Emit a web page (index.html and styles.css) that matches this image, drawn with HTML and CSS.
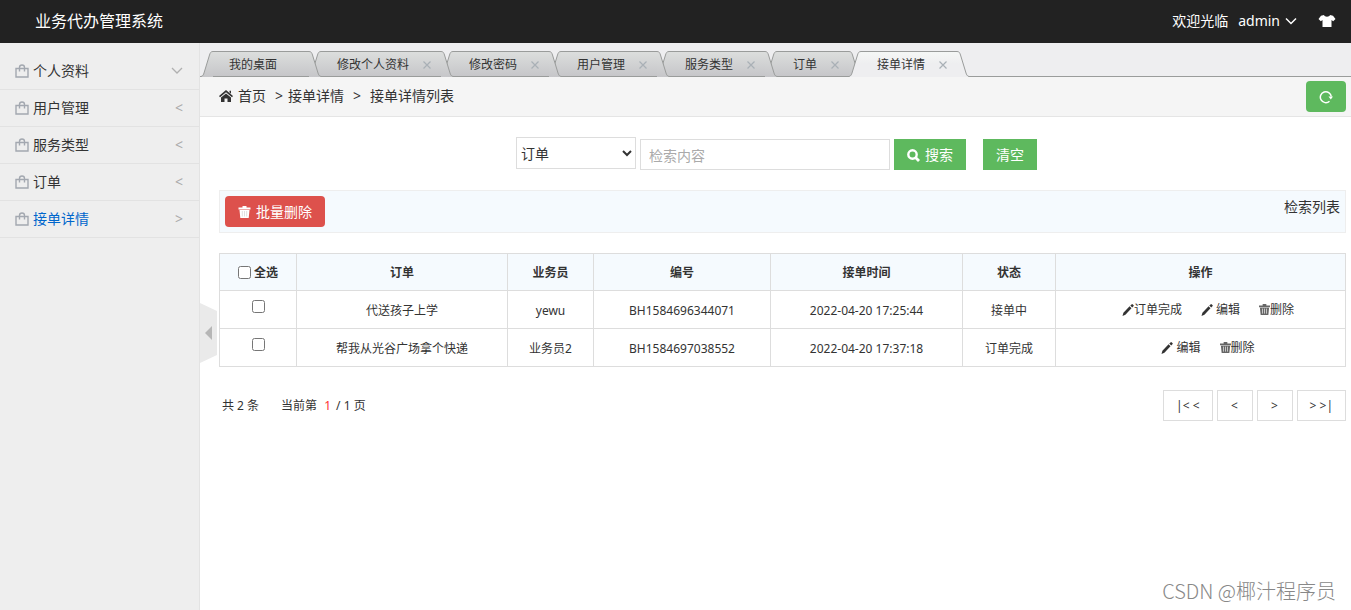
FILE: index.html
```
<!DOCTYPE html>
<html lang="zh-CN">
<head>
<meta charset="utf-8">
<title>业务代办管理系统</title>
<link rel="stylesheet" href="styles.css">
</head>
<body>
<svg class="defs" aria-hidden="true">
  <defs>
    <linearGradient id="tab-grey" x1="0" y1="0" x2="0" y2="1"><stop offset="0" stop-color="#dcdedd"/><stop offset="1" stop-color="#c6c6c9"/></linearGradient>
    <linearGradient id="tab-light" x1="0" y1="0" x2="0" y2="1"><stop offset="0" stop-color="#f5f7f6"/><stop offset="0.5" stop-color="#eeeef0"/><stop offset="1" stop-color="#eeeef0"/></linearGradient>
  </defs>
  <symbol id="bag" viewBox="0 0 14 14"><path d="M1 4.500h12v8.500H1zM4.500 7.500V3.500a2.500 2.500 0 0 1 5 0v4" fill="none" stroke="currentColor" stroke-width="1.400"/></symbol>
  <symbol id="trash" viewBox="0 0 12 12"><path d="M4 1.500V0h4v1.500h4V3.500H0v-2zM1 4h10l-.8 8H1.800z" fill="currentColor"/><path class="slits" d="M3.800 5v5.500M6 5v5.500M8.200 5v5.500" stroke-width=".9"/></symbol>
  <symbol id="pencil" viewBox="0 0 12 12"><path d="M.5 12l.9-3.300L7.600 2.300l1.900 1.900-6.100 6.600zM8.300 1.600L9.500.4a1 1 0 0 1 1.300 0l.6.6a.9.9 0 0 1 0 1.300l-1.200 1.200z" fill="currentColor"/></symbol>
  <symbol id="cap-left" viewBox="0 0 12 26"><path d="M0 25.500C2 25 2.500 23.500 3 22L8.500 4C9.200 1.800 9.800.5 12 .5V26H0z"/><path d="M0 25.500C2 25 2.500 23.500 3 22L8.500 4C9.200 1.800 9.800.5 12 .5" fill="none" stroke="#9a9c9b"/></symbol>
  <symbol id="cap-right" viewBox="0 0 12 26"><path d="M12 25.500C10 25 9.500 23.500 9 22L3.500 4C2.800 1.800 2.200.5 0 .5V26H12z"/><path d="M12 25.500C10 25 9.500 23.500 9 22L3.500 4C2.800 1.800 2.200.5 0 .5" fill="none" stroke="#9a9c9b"/></symbol>
</svg>

<header class="topbar">
  <h1 class="brand">业务代办管理系统</h1>
  <div class="user">
    <span>欢迎光临</span>
    <button class="plain user-menu" type="button">admin
      <svg width="12" height="12" viewBox="0 0 12 12"><path d="M1 3.500l5 5 5-5" fill="none" stroke="currentColor" stroke-width="1.500"/></svg>
    </button>
    <button class="plain skin" type="button" aria-label="换肤">
      <svg width="18" height="14" viewBox="0 0 18 14"><path d="M6 1l-3 .8L.5 5l2.300 2.300L4.500 6v7h9V6l1.700 1.300L17.500 5 15 1.800 12 1C11.500 3.300 6.500 3.300 6 1z" fill="currentColor"/></svg>
    </button>
  </div>
</header>

<div class="body">
  <nav class="sidebar">
    <a class="nav-item" href="#"><svg class="bag"><use href="#bag"/></svg><span>个人资料</span><svg class="down" viewBox="0 0 12 12"><path d="M1 3l5 5 5-5" fill="none" stroke="currentColor" stroke-width="1.300"/></svg></a>
    <a class="nav-item" href="#"><svg class="bag"><use href="#bag"/></svg><span>用户管理</span><i class="arrow">&lt;</i></a>
    <a class="nav-item" href="#"><svg class="bag"><use href="#bag"/></svg><span>服务类型</span><i class="arrow">&lt;</i></a>
    <a class="nav-item" href="#"><svg class="bag"><use href="#bag"/></svg><span>订单</span><i class="arrow">&lt;</i></a>
    <a class="nav-item current" href="#"><svg class="bag"><use href="#bag"/></svg><span>接单详情</span><i class="arrow">&gt;</i></a>
  </nav>

  <main class="main">
    <button class="plain collapse" type="button" aria-label="收起菜单">
      <svg width="17" height="60" viewBox="0 0 17 60"><path d="M0 0l17 8v44L0 60z" fill="#eaeaea"/><path d="M12 23v14l-7-7z" fill="#b6b6b6"/></svg>
    </button>
    <ul class="tabs">
      <li class="tab"><svg class="cap"><use href="#cap-left"/></svg><span class="tab-body">我的桌面</span><svg class="cap"><use href="#cap-right"/></svg></li>
      <li class="tab"><svg class="cap"><use href="#cap-left"/></svg><span class="tab-body">修改个人资料<button class="plain close" type="button" aria-label="关闭"><svg viewBox="0 0 8 8"><path d="M.5.5l7 7M7.500.5l-7 7"/></svg></button></span><svg class="cap"><use href="#cap-right"/></svg></li>
      <li class="tab"><svg class="cap"><use href="#cap-left"/></svg><span class="tab-body">修改密码<button class="plain close" type="button" aria-label="关闭"><svg viewBox="0 0 8 8"><path d="M.5.5l7 7M7.500.5l-7 7"/></svg></button></span><svg class="cap"><use href="#cap-right"/></svg></li>
      <li class="tab"><svg class="cap"><use href="#cap-left"/></svg><span class="tab-body">用户管理<button class="plain close" type="button" aria-label="关闭"><svg viewBox="0 0 8 8"><path d="M.5.5l7 7M7.500.5l-7 7"/></svg></button></span><svg class="cap"><use href="#cap-right"/></svg></li>
      <li class="tab"><svg class="cap"><use href="#cap-left"/></svg><span class="tab-body">服务类型<button class="plain close" type="button" aria-label="关闭"><svg viewBox="0 0 8 8"><path d="M.5.5l7 7M7.500.5l-7 7"/></svg></button></span><svg class="cap"><use href="#cap-right"/></svg></li>
      <li class="tab"><svg class="cap"><use href="#cap-left"/></svg><span class="tab-body">订单<button class="plain close" type="button" aria-label="关闭"><svg viewBox="0 0 8 8"><path d="M.5.5l7 7M7.500.5l-7 7"/></svg></button></span><svg class="cap"><use href="#cap-right"/></svg></li>
      <li class="tab active"><svg class="cap"><use href="#cap-left"/></svg><span class="tab-body">接单详情<button class="plain close" type="button" aria-label="关闭"><svg viewBox="0 0 8 8"><path d="M.5.5l7 7M7.500.5l-7 7"/></svg></button></span><svg class="cap"><use href="#cap-right"/></svg></li>
    </ul>

    <div class="crumbs">
      <svg class="home" width="14" height="12" viewBox="0 0 14 12"><path d="M7 0l7 6-1 1.200L7 2.200 1 7.200 0 6z" fill="currentColor"/><path d="M7 3.400l5 4.100V12H8.500V8.500h-3V12H2V7.500zM10.500.8H12v3l-1.500-1.300z" fill="currentColor"/></svg>
      <a href="#">首页</a><span class="sep">&gt;</span><span>接单详情</span><span class="sep wide">&gt;</span><span>接单详情列表</span>
      <button class="btn green round refresh" type="button" aria-label="刷新">
        <svg width="14" height="14" viewBox="0 0 14 14"><path d="M10.500 11.300A5.500 5.500 0 1 1 12.300 6.500" fill="none" stroke="currentColor" stroke-width="1.500"/><path d="M9.500 6.500h4.500l-2.200 3z" fill="currentColor"/></svg>
      </button>
    </div>

    <div class="content">
      <form class="search">
        <select class="field" aria-label="检索字段"><option>订单</option></select>
        <input class="keyword" type="text" placeholder="检索内容" aria-label="检索内容">
        <button class="btn green" type="button"><svg width="13" height="13" viewBox="0 0 13 13"><circle cx="5.500" cy="5.500" r="4.200" fill="none" stroke="currentColor" stroke-width="2.400"/><path d="M8.500 8.500l3.500 3.500" stroke="currentColor" stroke-width="2.800"/></svg>搜索</button>
        <button class="btn green clear" type="button">清空</button>
      </form>

      <div class="toolbar">
        <button class="btn red round" type="button"><svg width="13" height="12"><use href="#trash"/></svg>批量删除</button>
        <span class="caption">检索列表</span>
      </div>

      <table class="orders">
        <colgroup><col class="c1"><col class="c2"><col class="c3"><col class="c4"><col class="c5"><col class="c6"><col class="c7"></colgroup>
        <thead>
          <tr><th><label class="all"><input type="checkbox">全选</label></th><th>订单</th><th>业务员</th><th>编号</th><th>接单时间</th><th>状态</th><th>操作</th></tr>
        </thead>
        <tbody>
          <tr>
            <td class="pick"><input type="checkbox" aria-label="选择"></td><td>代送孩子上学</td><td>yewu</td><td>BH1584696344071</td><td>2022-04-20 17:25:44</td><td>接单中</td>
            <td class="ops"><div class="actions"><a href="#"><svg><use href="#pencil"/></svg>订单完成</a><a class="spaced" href="#"><svg><use href="#pencil"/></svg>编辑</a><a class="delete" href="#"><svg><use href="#trash"/></svg>删除</a></div></td>
          </tr>
          <tr>
            <td class="pick"><input type="checkbox" aria-label="选择"></td><td>帮我从光谷广场拿个快递</td><td>业务员2</td><td>BH1584697038552</td><td>2022-04-20 17:37:18</td><td>订单完成</td>
            <td class="ops"><div class="actions"><a class="spaced" href="#"><svg><use href="#pencil"/></svg>编辑</a><a class="delete" href="#"><svg><use href="#trash"/></svg>删除</a></div></td>
          </tr>
        </tbody>
      </table>

      <footer class="pager">
        <span>共 2 条</span><span class="where">当前第<b>1</b> / 1 页</span>
        <div class="pages">
          <a href="#">|&lt; &lt;</a><a href="#">&lt;</a><a href="#">&gt;</a><a href="#">&gt; &gt;|</a>
        </div>
      </footer>
    </div>
    <div class="watermark">CSDN @椰汁程序员</div>
  </main>
</div>
</body>
</html>
```
FILE: styles.css
```
* { box-sizing: border-box; }
body {
  margin: 0;
  min-height: 100vh;
  display: flex;
  flex-direction: column;
  background: #fff;
  color: #333;
  font: 14px/20px "Noto Sans", "Noto Sans CJK SC", sans-serif;
}
button, input, select { font: inherit; color: inherit; }
a { color: inherit; text-decoration: none; }
svg { flex: none; }
.defs { position: absolute; width: 0; height: 0; }
.plain { border: 0; padding: 0; background: none; cursor: pointer; }

.topbar {
  height: 43px;
  padding: 0 15px 2px 35px;
  display: flex;
  align-items: center;
  justify-content: space-between;
  background: #222;
  color: #fff;
}
.brand { margin: 0; font-size: 16px; font-weight: 400; }
.user { display: flex; align-items: center; gap: 10px; }
.user-menu { display: flex; align-items: center; gap: 5px; }
.skin { display: flex; margin-left: 11px; }

.body { flex: 1; display: flex; }
.sidebar {
  width: 200px;
  flex: none;
  padding-top: 10px;
  background: #eee;
  border-right: 1px solid #e3e3e3;
}
.nav-item {
  height: 37px;
  padding: 0 16px 0 15px;
  display: flex;
  align-items: center;
  gap: 4px;
  border-bottom: 1px solid #e2e2e2;
}
.nav-item span { flex: 1; }
.bag { width: 14px; height: 14px; color: #a3a8b0; }
.down { width: 12px; height: 12px; color: #b0b0b0; }
.arrow { font-style: normal; color: #aaa; }
.current span { color: #06c; }

.main { flex: 1; min-width: 0; position: relative; }
.collapse { position: absolute; left: 0; top: 260px; display: flex; }

.tabs {
  list-style: none;
  margin: 0;
  padding: 8px 0 0 1px;
  height: 34px;
  display: flex;
  background: #eeeef0;
  box-shadow: inset 0 -1px #9a9c9b;
}
.tab {
  position: relative;
  height: 26px;
  display: flex;
  margin-right: -12px;
  fill: url(#tab-grey);
}
.tab:nth-child(1) { z-index: 7; }
.tab:nth-child(2) { z-index: 6; }
.tab:nth-child(3) { z-index: 5; }
.tab:nth-child(4) { z-index: 4; }
.tab:nth-child(5) { z-index: 3; }
.tab:nth-child(6) { z-index: 2; }
.tab.active { z-index: 8; fill: url(#tab-light); }
.cap { width: 12px; height: 26px; }
.tab-body {
  padding: 2px 10px 0 16px;
  display: flex;
  align-items: center;
  font-size: 12px;
  border-top: 1px solid #9a9c9b;
  border-bottom: 1px solid #9a9c9b;
  background: linear-gradient(#dcdedd, #c6c6c9);
}
.tab:first-child .tab-body { padding-right: 32px; }
.active .tab-body { border-bottom-color: #eeeef0; background: linear-gradient(#f5f7f6, #eeeef0 50%); }
.close { width: 8px; height: 8px; margin-left: 14px; display: flex; }
.close svg { width: 8px; height: 8px; fill: none; stroke: #a9b0b6; stroke-width: 1.2; }

.crumbs {
  height: 40px;
  padding: 0 5px 1px 19px;
  display: flex;
  align-items: center;
  background: #f5f5f5;
  border-bottom: 1px solid #e5e5e5;
}
.home { margin-right: 5px; }
.sep { margin: 0 5px 0 9px; }
.sep.wide { margin-right: 9px; }
.refresh { margin-left: auto; }

.btn {
  height: 31px;
  padding: 1px 13px 0;
  display: flex;
  align-items: center;
  gap: 5px;
  border: 0;
  color: #fff;
  cursor: pointer;
}
.green { background: #5eb95e; }
.red { background: #dd514c; }
.round { border-radius: 4px; }

.content { padding: 20px 5px 0 19px; }
.search {
  display: flex;
  align-items: flex-end;
  justify-content: center;
  gap: 4px;
  padding-right: 12px;
}
.field, .keyword { border: 1px solid #ddd; background: #fff; outline: 0; }
.field { width: 120px; height: 32px; margin-bottom: 1px; padding: 0; }
.keyword { width: 250px; height: 31px; padding: 1px 8px 0; }
.keyword::placeholder { color: #aaa; }
.clear { margin-left: 13px; }

.toolbar {
  margin: 20px 0;
  padding: 5px;
  display: flex;
  align-items: flex-start;
  justify-content: space-between;
  background: #f5fafe;
  border: 1px solid #eee;
}
.caption { padding-top: 1px; }

.orders {
  width: 100%;
  table-layout: fixed;
  border-collapse: collapse;
  font-size: 12px;
  text-align: center;
}
.orders th, .orders td { height: 38px; padding: 2px 0 0; border: 1px solid #ddd; }
.orders th { height: 37px; padding-top: 1px; font-weight: 700; background: #f5fafe; }
.orders input { width: 13px; height: 13px; margin: 0; }
.orders .pick { padding: 0 0 2px; }
.all { display: flex; align-items: center; justify-content: center; gap: 3px; }
.c1 { width: 6.84%; }
.c2 { width: 18.74%; }
.c3 { width: 7.64%; }
.c4 { width: 15.72%; }
.c5 { width: 17.05%; }
.c6 { width: 8.26%; }
.orders .ops { padding: 0 0 0 15px; }
.actions, .actions a { display: flex; align-items: center; justify-content: center; }
.actions { gap: 19px; }
.actions svg { width: 12px; height: 12px; }
.actions .spaced { gap: 3px; }
.actions .delete svg { width: 11px; height: 11px; color: #666; }
.slits { stroke: #ddd; }
.red .slits { stroke: #dd514c; }

.pager { margin-top: 23px; padding-left: 3px; display: flex; align-items: center; font-size: 12px; }
.where { margin-left: 22px; }
.where b { margin: 0 2px 0 7px; font-weight: 400; color: #f33; }
.pages { margin-left: auto; display: flex; gap: 4px; }
.pages a { min-width: 36px; padding: 5px 12px 4px; text-align: center; border: 1px solid #ddd; }

.watermark {
  position: absolute;
  right: 15px;
  bottom: 6px;
  font: 300 20px/26px "Noto Sans CJK SC", sans-serif;
  color: #888;
}
```
